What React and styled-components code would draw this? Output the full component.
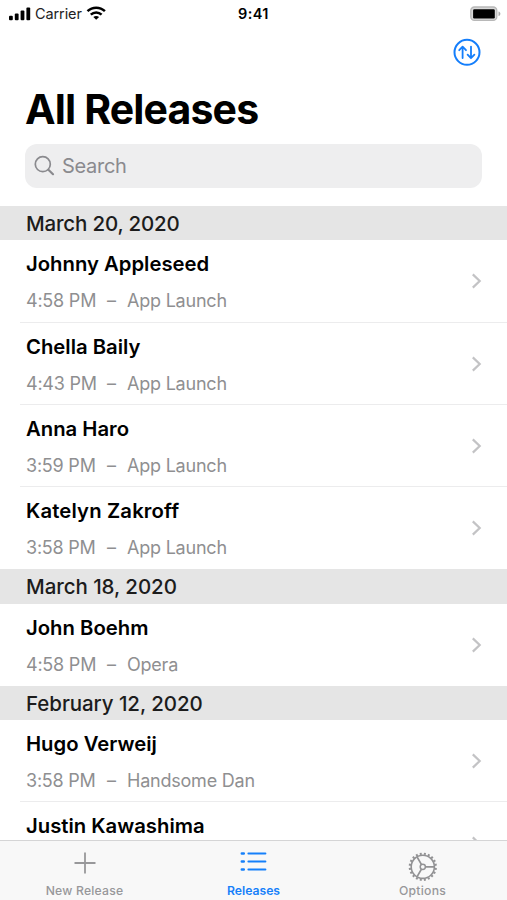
import React from "react";
import styled, { createGlobalStyle } from "styled-components";

const GlobalStyle = createGlobalStyle`
  *, *::before, *::after { box-sizing: border-box; }
  body { margin: 0; background: #fff; overflow: hidden; }
`;

const Screen = styled.div`
  width: 507px;
  height: 900px;
  display: flex;
  flex-direction: column;
  overflow: hidden;
  background: #fff;
  color: #000;
  font-family: Inter, "Liberation Sans", sans-serif;
  white-space: nowrap;
`;

const StatusBar = styled.div`
  flex: none;
  height: 27px;
  padding: 0 6px 0 9px;
  display: grid;
  grid-template-columns: 229px auto 1fr;
  align-items: center;
`;

const Signal = styled.div`
  display: flex;
  align-items: center;
  font-size: 14.5px;
  letter-spacing: -0.1px;
  color: #222;
  gap: 4px;
`;

const Clock = styled.div`
  font-size: 14.5px;
  font-weight: 600;
  letter-spacing: 0.4px;
`;

const BatterySlot = styled.div`
  display: flex;
  justify-content: flex-end;
`;

const NavBar = styled.div`
  flex: none;
  height: 57px;
  padding: 11px 26.5px 0 0;
  display: flex;
  justify-content: flex-end;
  align-items: flex-start;
`;

const SortButton = styled.button`
  border: 0;
  padding: 0;
  background: none;
  display: flex;
`;

const Title = styled.h1`
  flex: none;
  margin: 0;
  padding-left: 25px;
  height: 60px;
  line-height: 50px;
  font-size: 41px;
  font-weight: 700;
  letter-spacing: -0.85px;
`;

const SearchField = styled.div`
  flex: none;
  height: 44px;
  margin: 0 25px 18px;
  padding-left: 9px;
  display: flex;
  align-items: center;
  gap: 7px;
  border-radius: 12px;
  background: #eeeeef;
  color: #8a8a8e;
  font-size: 20px;
  letter-spacing: -0.3px;
`;

const List = styled.div`
  flex: 1;
  min-height: 0;
  overflow: hidden;
`;

const SectionHeader = styled.div`
  height: 34.3px;
  padding-left: 26px;
  line-height: 35px;
  background: #e5e5e5;
  color: #1c1c1c;
  font-size: 20.5px;
  font-weight: 500;
  letter-spacing: ${(p) => p.$tracking}px;
`;

const Row = styled.div`
  height: 82.25px;
  margin-left: 20px;
  padding: 0 25px 0 6px;
  display: flex;
  justify-content: space-between;
  border-bottom: ${(p) => (p.$last ? "0" : "1.4px solid #ececed")};
`;

const RowText = styled.div`
  padding-top: 11px;
  display: flex;
  flex-direction: column;
  gap: 12px;
`;

const Accessory = styled.div`
  padding-top: 33.2px;
`;

const Name = styled.div`
  line-height: 26px;
  font-size: 20.3px;
  font-weight: 600;
  letter-spacing: ${(p) => p.$tracking}px;
`;

const Detail = styled.div`
  display: flex;
  line-height: 24px;
  font-size: 18px;
  color: #8f8f91;
  letter-spacing: -0.22px;
`;

const Time = styled.span`
  width: 81px;
`;

const Dash = styled.span`
  width: 20px;
`;

const TabBar = styled.div`
  flex: none;
  height: 60px;
  border-top: 1px solid #d5d5d6;
  background: #f8f8f8;
  display: grid;
  grid-template-columns: repeat(3, 1fr);
`;

const Tab = styled.div`
  display: flex;
  flex-direction: column;
  align-items: center;
  color: ${(p) => (p.$active ? "#1680fa" : "#97979a")};
  font-size: 12.2px;
  line-height: 16px;
  font-weight: ${(p) => (p.$active ? 600 : 500)};
  letter-spacing: ${(p) => p.$tracking}px;
`;

const TabIcon = styled.div`
  height: 42px;
  padding-top: ${(p) => p.$top}px;
  display: flex;
  align-items: flex-start;
`;

const SignalIcon = () => (
  <svg width="22" height="14" viewBox="0 0 22 14">
    <rect x="0" y="8.7" width="3.8" height="4.6" rx="1" />
    <rect x="5.8" y="6.4" width="3.8" height="6.9" rx="1" />
    <rect x="11.6" y="3.6" width="3.8" height="9.7" rx="1" />
    <rect x="17.4" y="0.6" width="3.8" height="12.7" rx="1" />
  </svg>
);

const WifiIcon = () => (
  <svg width="20" height="15" viewBox="0 0 20 15" fill="none" stroke="#000" strokeWidth="2.5">
    <path d="M1.5 5.2C6.4 0.5 14 0.5 18.9 5.2" />
    <path d="M4.8 8.7C7.9 5.8 12.5 5.8 15.6 8.7" />
    <path d="M10.2 13.8L7.3 11C9 9.6 11.4 9.6 13.1 11Z" fill="#000" stroke="none" />
  </svg>
);

const BatteryIcon = () => (
  <svg width="31" height="16" viewBox="0 0 31 16">
    <rect x="0.8" y="1" width="26" height="13.4" rx="3.6" fill="#d8d8d8" stroke="#b8b8b8" strokeWidth="1.3" />
    <rect x="3.1" y="3.2" width="21.7" height="9.2" rx="1.2" />
    <path d="M28.5 5.5C31 6.2 31 9.4 28.5 10Z" fill="#aaa" />
  </svg>
);

const SortIcon = () => (
  <svg width="28" height="28" viewBox="0 0 28 28" fill="none" stroke="#147efb" strokeLinecap="round" strokeLinejoin="round">
    <circle cx="14" cy="14.3" r="12.5" strokeWidth="2" />
    <path d="M9.6 20V8.8M6.2 12.2L9.6 8.6L13 12.2M18 8.6V20M14.6 16.6L18 20.2L21.4 16.6" strokeWidth="1.8" />
  </svg>
);

const SearchIcon = () => (
  <svg width="21" height="22" viewBox="0 0 21 22" fill="none" stroke="#8a8a8e" strokeLinecap="round">
    <circle cx="8.8" cy="9.2" r="7.5" strokeWidth="1.7" />
    <path d="M14.4 14.8L19 19.2" strokeWidth="2.2" />
  </svg>
);

const Chevron = () => (
  <svg width="12" height="16" viewBox="0 0 12 16" fill="none" stroke="#c3c3c5" strokeWidth="2.2">
    <path d="M2.8 1.4L9.7 8L2.8 14.6" />
  </svg>
);

const PlusIcon = () => (
  <svg width="22" height="22" viewBox="0 0 22 22" stroke="#98989a" strokeWidth="1.8">
    <path d="M11 0.5V21.5M0.5 11H21.5" />
  </svg>
);

const ListIcon = () => (
  <svg width="28" height="22" viewBox="0 0 28 22" stroke="#1680fa" strokeLinecap="round">
    <path d="M8.4 2.5H25.4M8.4 10.5H25.4M8.4 18.5H25.4" strokeWidth="2" />
    <path d="M1.9 2.5H3.7M1.9 10.5H3.7M1.9 18.5H3.7" strokeWidth="2.7" />
  </svg>
);

const TEETH = Array.from({ length: 20 }, (_, i) => i * 18);

const GearIcon = () => (
  <svg width="30" height="30" viewBox="0 0 30 30" fill="none" stroke="#929294">
    <circle cx="14.8" cy="14.8" r="11.6" strokeWidth="1.6" />
    {TEETH.map((angle) => (
      <path key={angle} d="M14.8 0.7V2.8" strokeWidth="2" transform={`rotate(${angle + 9} 14.8 14.8)`} />
    ))}
    <circle cx="14.8" cy="14.8" r="2.6" strokeWidth="1.5" />
    <path d="M17.6 14.8H26.1M13.4 12.4L9.1 5M13.4 17.2L9.1 24.6" strokeWidth="1.7" />
  </svg>
);

const SECTIONS = [
  {
    date: "March 20, 2020",
    tracking: -0.18,
    rows: [
      { name: "Johnny Appleseed", time: "4:58 PM", place: "App Launch", tracking: 0 },
      { name: "Chella Baily", time: "4:43 PM", place: "App Launch", tracking: 0 },
      { name: "Anna Haro", time: "3:59 PM", place: "App Launch", tracking: 0 },
      { name: "Katelyn Zakroff", time: "3:58 PM", place: "App Launch", tracking: 0.15 },
    ],
  },
  {
    date: "March 18, 2020",
    tracking: -0.06,
    rows: [{ name: "John Boehm", time: "4:58 PM", place: "Opera", tracking: 0 }],
  },
  {
    date: "February 12, 2020",
    tracking: -0.06,
    rows: [
      { name: "Hugo Verweij", time: "3:58 PM", place: "Handsome Dan", tracking: 0 },
      { name: "Justin Kawashima", tracking: 0 },
    ],
  },
];

export default function App() {
  return (
    <>
      <GlobalStyle />
      <Screen>
        <StatusBar>
          <Signal>
            <SignalIcon />
            <span>Carrier</span>
            <WifiIcon />
          </Signal>
          <Clock>9:41</Clock>
          <BatterySlot>
            <BatteryIcon />
          </BatterySlot>
        </StatusBar>
        <NavBar>
          <SortButton aria-label="Sort">
            <SortIcon />
          </SortButton>
        </NavBar>
        <Title>All Releases</Title>
        <SearchField>
          <SearchIcon />
          <span>Search</span>
        </SearchField>
        <List>
          {SECTIONS.map((section) => (
            <React.Fragment key={section.date}>
              <SectionHeader $tracking={section.tracking}>{section.date}</SectionHeader>
              {section.rows.map((row, i) => (
                <Row key={row.name} $last={i === section.rows.length - 1}>
                  <RowText>
                    <Name $tracking={row.tracking}>{row.name}</Name>
                    {row.time && (
                      <Detail>
                        <Time>{row.time}</Time>
                        <Dash>–</Dash>
                        <span>{row.place}</span>
                      </Detail>
                    )}
                  </RowText>
                  <Accessory>
                    <Chevron />
                  </Accessory>
                </Row>
              ))}
            </React.Fragment>
          ))}
        </List>
        <TabBar>
          <Tab $tracking={0.2}>
            <TabIcon $top={11}>
              <PlusIcon />
            </TabIcon>
            New Release
          </Tab>
          <Tab $active $tracking={0}>
            <TabIcon $top={10}>
              <ListIcon />
            </TabIcon>
            Releases
          </Tab>
          <Tab $tracking={0.25}>
            <TabIcon $top={11}>
              <GearIcon />
            </TabIcon>
            Options
          </Tab>
        </TabBar>
      </Screen>
    </>
  );
}
